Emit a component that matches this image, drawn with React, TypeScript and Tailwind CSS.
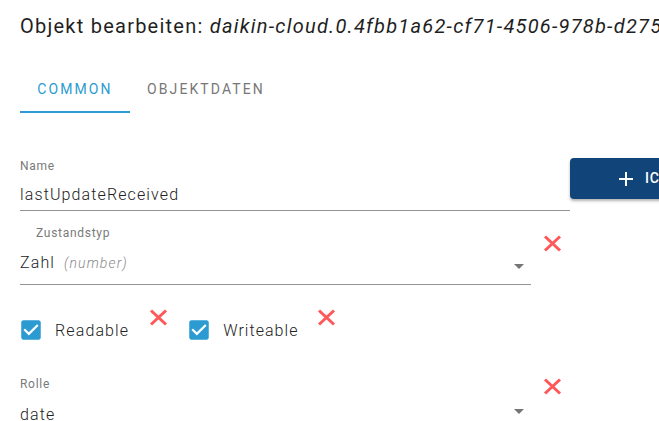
import React from "react";

const font = { fontFamily: "Roboto, 'Noto Sans', sans-serif" };

function RedX() {
  return (
    <svg width="19" height="17" viewBox="0 0 19 17" className="block">
      <path d="M2 1.5 L17 15.5 M17 1.5 L2 15.5" stroke="#ff5858" strokeWidth="3" strokeLinecap="butt" />
    </svg>
  );
}

function Arrow() {
  return (
    <svg width="24" height="24" viewBox="0 0 24 24" className="block">
      <path d="M7 10l5 5 5-5z" fill="#757575" />
    </svg>
  );
}

function Check() {
  return (
    <svg width="26" height="26" viewBox="0 0 24 24" className="block">
      <path
        d="M19 3H5c-1.11 0-2 .9-2 2v14c0 1.1.89 2 2 2h14c1.11 0 2-.9 2-2V5c0-1.1-.89-2-2-2zm-9 14l-5-5 1.41-1.41L10 14.17l7.59-7.59L19 8l-9 9z"
        fill="#2b9bd1"
      />
    </svg>
  );
}

export default function App() {
  return (
    <div className="w-[659px] h-[421px] overflow-hidden bg-white text-[#222222] font-light" style={font}>
      <div className="pt-[12px] pl-[20px] h-[40px] whitespace-nowrap text-[20px] leading-[28px] tracking-[0.062em] font-normal text-[#1f1f1f]">
        Objekt bearbeiten: <i>daikin-cloud.0.4fbb1a62-cf71-4506-978b-d275c0a1e9f3</i>
      </div>

      <div className="mt-[25px] ml-[20px] flex h-[48px]">
        <div className="relative w-[110px] shrink-0 flex items-center justify-center text-[14px] tracking-[0.15em] font-normal text-[#2b9bd1]">
          COMMON
          <div className="absolute left-0 right-0 bottom-0 h-[2px] bg-[#2b9bd1]" />
        </div>
        <div className="pl-[17px] pr-[17px] flex items-center text-[14px] tracking-[0.15em] font-normal text-[#777777]">
          OBJEKTDATEN
        </div>
      </div>

      <div className="mt-[45px] flex items-start">
        <div className="ml-[20px] w-[550px] shrink-0 border-b border-[#949494] mt-[1px]">
          <div className="text-[12px] leading-[14px] tracking-[0.06em] font-normal text-[#7a7a7a]">Name</div>
          <div className="mt-[12px] h-[19px] text-[16px] leading-[19px] tracking-[0.07em] mb-[6px] whitespace-nowrap">
            lastUpdateReceived
          </div>
        </div>
        <div className="w-[200px] shrink-0 h-[41px] rounded-[4px] bg-[#11457a] shadow-[0_2px_3px_rgba(0,0,0,0.3)] flex items-center pl-[44px] text-white text-[14px] font-medium tracking-[0.06em] whitespace-nowrap">
          <svg width="24" height="24" viewBox="0 0 24 24" className="block shrink-0">
            <path d="M19 13h-6v6h-2v-6H5v-2h6V5h2v6h6v2z" fill="#ffffff" />
          </svg>
          <span className="ml-[7px]">ICON</span>
        </div>
      </div>

      <div className="mt-[15px] flex items-start">
        <div className="ml-[20px] w-[511px] shrink-0 border-b border-[#949494] relative">
          <div className="pl-[16px] text-[12px] leading-[14px] tracking-[0.06em] font-normal text-[#7a7a7a]">Zustandstyp</div>
          <div className="mt-[13px] h-[19px] text-[16px] leading-[19px] tracking-[0.07em] mb-[12px] whitespace-nowrap">
            Zahl <span className="ml-[4px] italic text-[14px] text-[#8a8a8a]">(number)</span>
          </div>
          <div className="absolute right-0 top-[28px]">
            <Arrow />
          </div>
        </div>
        <div className="ml-[12px] mt-[9px]">
          <RedX />
        </div>
      </div>

      <div className="mt-[24px] flex items-start">
        <div className="ml-[18px] mt-[8px]">
          <Check />
        </div>
        <div className="ml-[11px] mt-[12px] text-[16px] leading-[19px] tracking-[0.07em]">Readable</div>
        <div className="ml-[20px]">
          <RedX />
        </div>
        <div className="ml-[18px] mt-[8px]">
          <Check />
        </div>
        <div className="ml-[11px] mt-[12px] text-[16px] leading-[19px] tracking-[0.065em]">Writeable</div>
        <div className="ml-[19px]">
          <RedX />
        </div>
      </div>

      <div className="mt-[34px] flex items-start">
        <div className="ml-[20px] w-[511px] shrink-0 relative h-[44px]">
          <div className="text-[12px] leading-[14px] tracking-[0.06em] font-normal text-[#7a7a7a]">Rolle</div>
          <div className="mt-[14px] h-[19px] text-[16px] leading-[19px] tracking-[0.07em] whitespace-nowrap">date</div>
          <div className="absolute right-0 top-[22px]">
            <Arrow />
          </div>
        </div>
        <div className="ml-[12px] mt-[1px]">
          <RedX />
        </div>
      </div>
    </div>
  );
}
